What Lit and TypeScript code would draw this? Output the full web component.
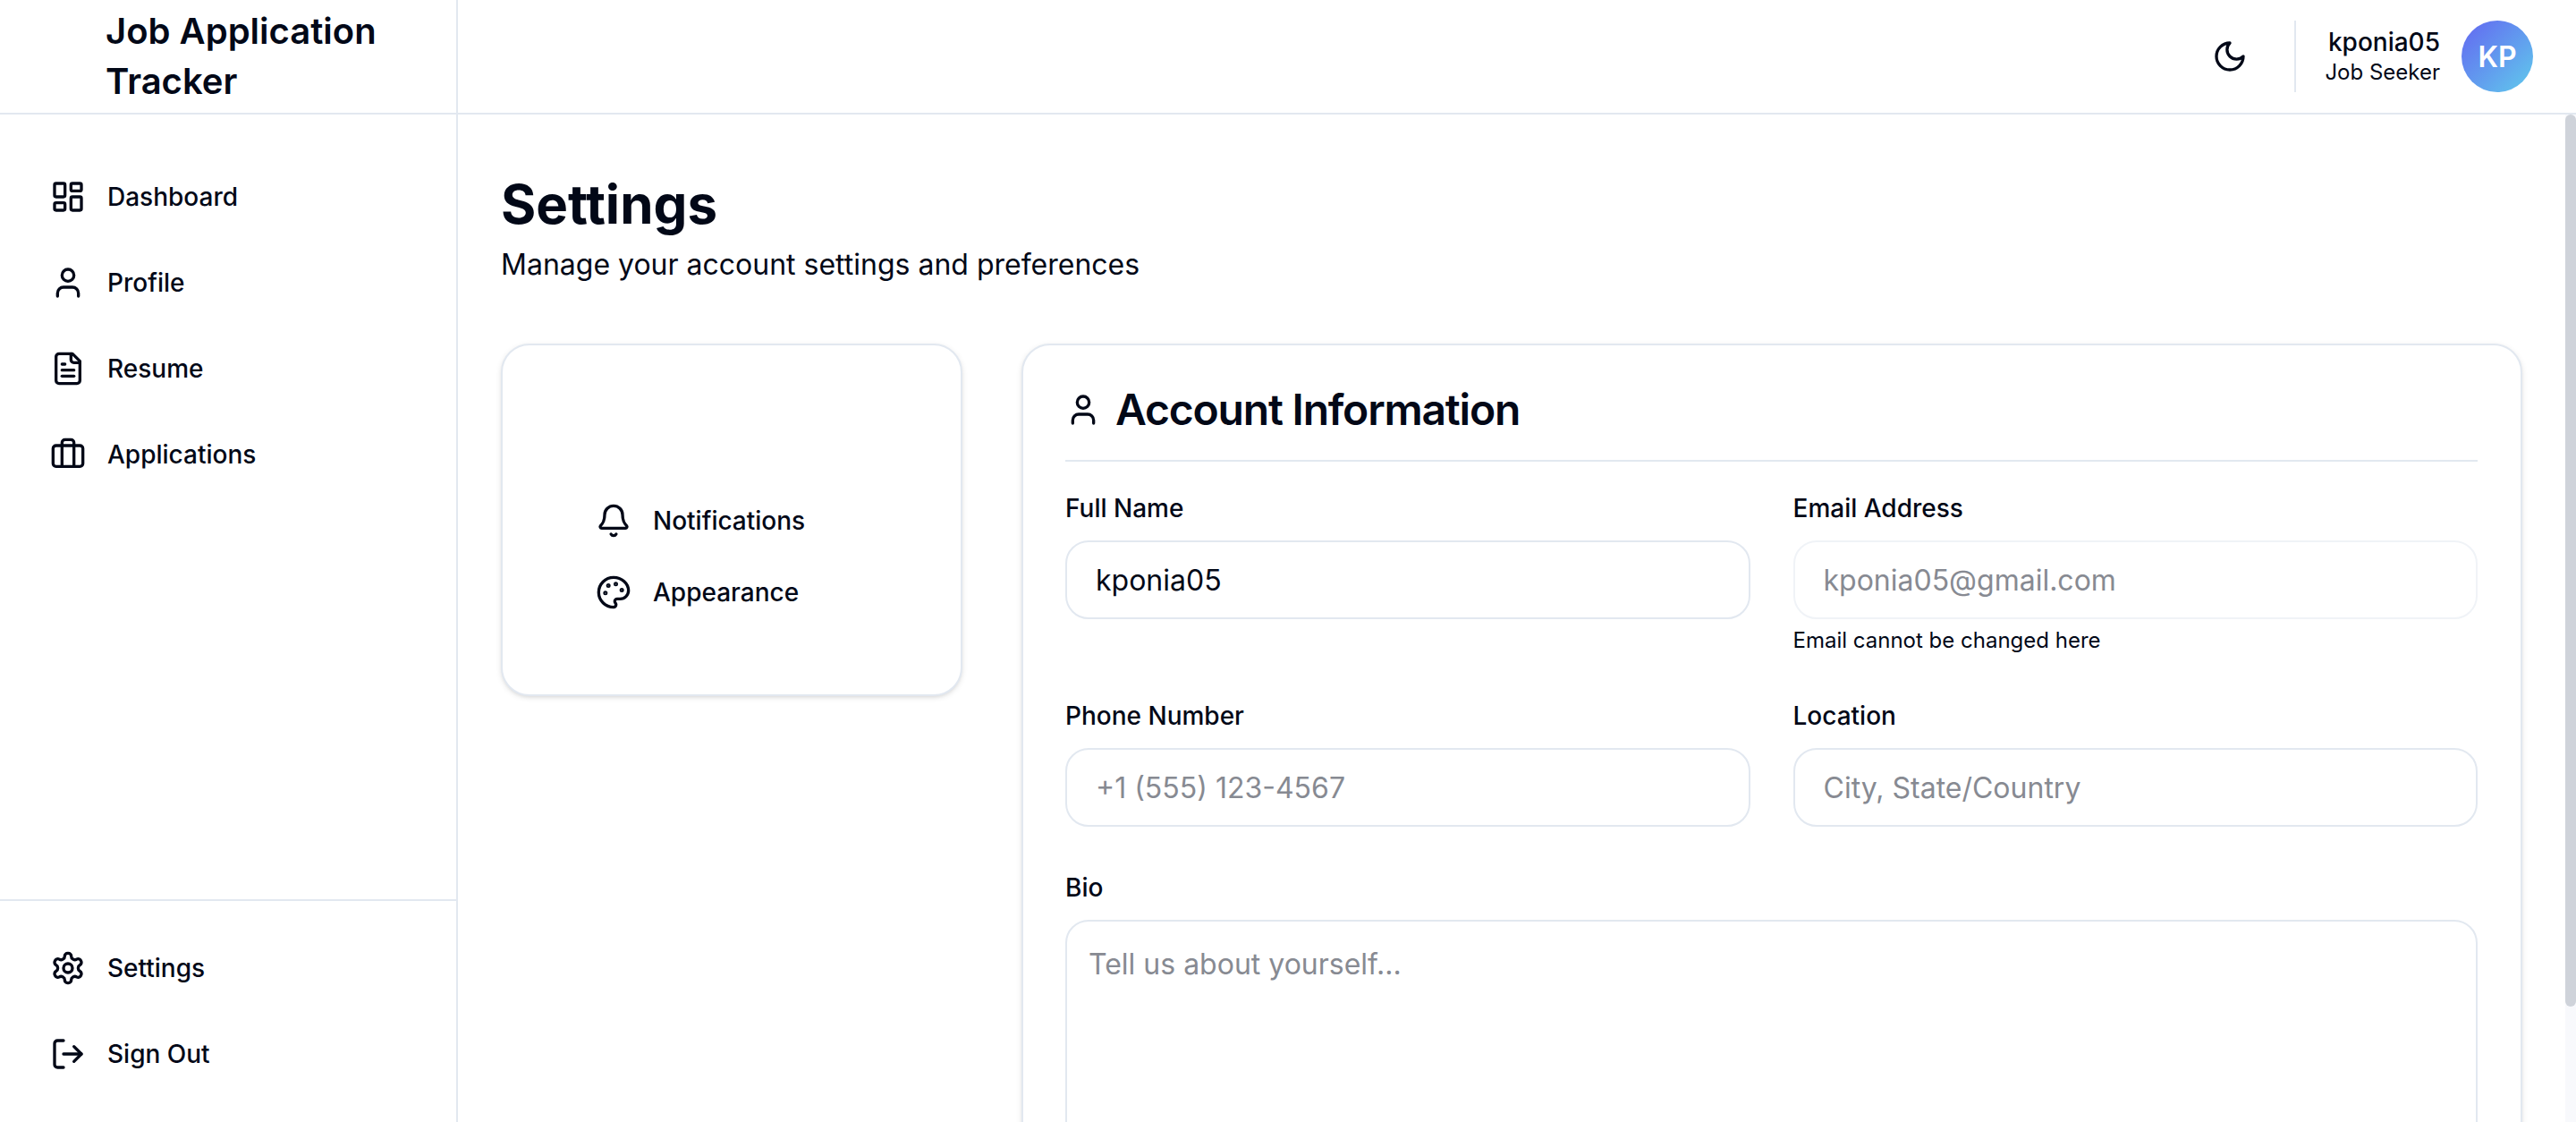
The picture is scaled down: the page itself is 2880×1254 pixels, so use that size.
import { LitElement, html, css, svg } from 'lit';
import { customElement } from 'lit/decorators.js';

const icons = {
  dashboard: svg`<rect x="3" y="3" width="7" height="9" rx="1"/><rect x="14" y="3" width="7" height="5" rx="1"/><rect x="14" y="12" width="7" height="9" rx="1"/><rect x="3" y="16" width="7" height="5" rx="1"/>`,
  user: svg`<path d="M19 21v-2a4 4 0 0 0-4-4H9a4 4 0 0 0-4 4v2"/><circle cx="12" cy="7" r="4"/>`,
  file: svg`<path d="M15 2H6a2 2 0 0 0-2 2v16a2 2 0 0 0 2 2h12a2 2 0 0 0 2-2V7Z"/><path d="M14 2v4a2 2 0 0 0 2 2h4"/><path d="M10 9H8"/><path d="M16 13H8"/><path d="M16 17H8"/>`,
  briefcase: svg`<path d="M16 20V4a2 2 0 0 0-2-2h-4a2 2 0 0 0-2 2v16"/><rect x="2" y="6" width="20" height="14" rx="2"/>`,
  settings: svg`<path d="M12.22 2h-.44a2 2 0 0 0-2 2v.18a2 2 0 0 1-1 1.73l-.43.25a2 2 0 0 1-2 0l-.15-.08a2 2 0 0 0-2.73.73l-.22.38a2 2 0 0 0 .73 2.73l.15.1a2 2 0 0 1 1 1.72v.51a2 2 0 0 1-1 1.74l-.15.09a2 2 0 0 0-.73 2.73l.22.38a2 2 0 0 0 2.73.73l.15-.08a2 2 0 0 1 2 0l.43.25a2 2 0 0 1 1 1.73V20a2 2 0 0 0 2 2h.44a2 2 0 0 0 2-2v-.18a2 2 0 0 1 1-1.73l.43-.25a2 2 0 0 1 2 0l.15.08a2 2 0 0 0 2.73-.73l.22-.39a2 2 0 0 0-.73-2.73l-.15-.08a2 2 0 0 1-1-1.74v-.5a2 2 0 0 1 1-1.74l.15-.09a2 2 0 0 0 .73-2.73l-.22-.38a2 2 0 0 0-2.73-.73l-.15.08a2 2 0 0 1-2 0l-.43-.25a2 2 0 0 1-1-1.73V4a2 2 0 0 0-2-2z"/><circle cx="12" cy="12" r="3"/>`,
  logout: svg`<path d="M9 21H5a2 2 0 0 1-2-2V5a2 2 0 0 1 2-2h4"/><path d="m16 17 5-5-5-5"/><path d="M21 12H9"/>`,
  moon: svg`<path d="M12 3a6 6 0 0 0 9 9 9 9 0 1 1-9-9Z"/>`,
  bell: svg`<path d="M10.268 21a2 2 0 0 0 3.464 0"/><path d="M3.262 15.326A1 1 0 0 0 4 17h16a1 1 0 0 0 .74-1.673C19.41 13.956 18 12.499 18 8A6 6 0 0 0 6 8c0 4.499-1.411 5.956-2.738 7.326"/>`,
  palette: svg`<circle cx="13.5" cy="6.5" r=".5" fill="currentColor"/><circle cx="17.5" cy="10.5" r=".5" fill="currentColor"/><circle cx="8.5" cy="7.5" r=".5" fill="currentColor"/><circle cx="6.5" cy="12.5" r=".5" fill="currentColor"/><path d="M12 2C6.5 2 2 6.5 2 12s4.5 10 10 10c.926 0 1.648-.746 1.648-1.688 0-.437-.18-.835-.437-1.125-.29-.289-.438-.652-.438-1.125a1.64 1.64 0 0 1 1.668-1.668h1.996c3.051 0 5.555-2.503 5.555-5.554C21.965 6.012 17.461 2 12 2z"/>`,
};

const icon = (name: keyof typeof icons) =>
  html`<svg class="icon" viewBox="0 0 24 24">${icons[name]}</svg>`;

const mainNav: [keyof typeof icons, string][] = [
  ['dashboard', 'Dashboard'],
  ['user', 'Profile'],
  ['file', 'Resume'],
  ['briefcase', 'Applications'],
];

const footNav: [keyof typeof icons, string][] = [
  ['settings', 'Settings'],
  ['logout', 'Sign Out'],
];

@customElement('app-root')
export class AppRoot extends LitElement {
  static styles = css`
    :host {
      display: flex;
      flex-direction: column;
      height: 100vh;
      overflow: hidden;
      background: #fff;
      color: #020817;
      font-family: Inter, 'Noto Sans', sans-serif;
    }
    .icon {
      width: 40px;
      height: 40px;
      flex: none;
      fill: none;
      stroke: currentColor;
      stroke-width: 2;
      stroke-linecap: round;
      stroke-linejoin: round;
    }

    .topbar {
      display: flex;
      flex: none;
      height: 128px;
      box-sizing: border-box;
      border-bottom: 2px solid #e2e8f0;
    }
    .brand {
      display: flex;
      align-items: center;
      flex: none;
      width: 512px;
      box-sizing: border-box;
      padding-left: 118px;
      padding-right: 80px;
      border-right: 2px solid #e2e8f0;
      font-size: 40px;
      line-height: 56px;
      font-weight: 600;
    }
    .top-right {
      display: flex;
      flex: 1;
      align-items: center;
      justify-content: flex-end;
      padding-right: 48px;
    }
    .theme {
      display: flex;
      margin-right: 52px;
    }
    .account {
      display: flex;
      align-items: center;
      gap: 24px;
      padding-left: 32px;
      height: 80px;
      border-left: 2px solid #e2e8f0;
    }
    .who {
      text-align: right;
    }
    .who-name {
      font-size: 28px;
      line-height: 36px;
      font-weight: 500;
    }
    .who-role {
      font-size: 24px;
      line-height: 32px;
    }
    .avatar {
      display: flex;
      align-items: center;
      justify-content: center;
      width: 80px;
      height: 80px;
      border-radius: 50%;
      background: linear-gradient(135deg, #6366f1, #60cbec);
      color: #fff;
      font-size: 32px;
      font-weight: 600;
    }

    .body {
      display: flex;
      flex: 1;
      min-height: 0;
    }
    .sidebar {
      display: flex;
      flex: none;
      flex-direction: column;
      justify-content: space-between;
      width: 512px;
      box-sizing: border-box;
      border-right: 2px solid #e2e8f0;
    }
    .nav {
      display: flex;
      flex-direction: column;
      gap: 16px;
      padding: 52px 0 36px 56px;
    }
    .nav-foot {
      padding-top: 35px;
      border-top: 2px solid #e2e8f0;
    }
    .nav-item {
      display: flex;
      align-items: center;
      gap: 24px;
      height: 80px;
      font-size: 28px;
      font-weight: 500;
    }

    .main {
      position: relative;
      flex: 1;
      min-width: 0;
      overflow: hidden;
      padding: 64px 60px 48px 48px;
    }
    .track {
      position: absolute;
      top: 0;
      right: 0;
      bottom: 0;
      width: 12px;
      background: #f8f9fc;
    }
    .thumb {
      height: 997px;
      border-radius: 6px;
      background: #cfd3da;
    }
    h1 {
      margin: 0;
      font-size: 60px;
      line-height: 72px;
      font-weight: 700;
    }
    .subtitle {
      margin: 8px 0 0;
      font-size: 32px;
      line-height: 48px;
    }
    .columns {
      display: grid;
      grid-template-columns: 516px 1fr;
      align-items: start;
      gap: 66px;
      margin-top: 64px;
    }
    .card {
      box-sizing: border-box;
      border: 2px solid #e2e8f0;
      border-radius: 32px;
      background: #fff;
      box-shadow: 0 2px 6px rgba(0, 0, 0, 0.1), 0 2px 4px -2px rgba(0, 0, 0, 0.1);
    }
    .tabs {
      display: flex;
      flex-direction: column;
      gap: 16px;
      height: 394px;
      padding: 164px 0 0 104px;
    }
    .tab {
      display: flex;
      align-items: center;
      gap: 24px;
      height: 64px;
      font-size: 28px;
      font-weight: 500;
    }
    .account-card {
      padding: 48px 48px 48px 47px;
      height: 1200px;
    }
    .card-head {
      display: flex;
      align-items: center;
      gap: 16px;
      padding-bottom: 32px;
      border-bottom: 2px solid #e2e8f0;
    }
    h2 {
      margin: 0;
      font-size: 48px;
      line-height: 48px;
      font-weight: 600;
      letter-spacing: -1.2px;
    }
    .form {
      display: grid;
      grid-template-columns: 1fr 1fr;
      gap: 48px;
      margin-top: 32px;
    }
    .wide {
      grid-column: 1 / 3;
    }
    label {
      display: block;
      margin-bottom: 16px;
      font-size: 28px;
      line-height: 40px;
      font-weight: 500;
    }
    input,
    textarea {
      display: block;
      width: 100%;
      box-sizing: border-box;
      border: 2px solid #e2e8f0;
      border-radius: 26px;
      outline: none;
      background: #fff;
      color: #020817;
      font: 32px/48px Inter, 'Noto Sans', sans-serif;
    }
    input {
      height: 88px;
      padding: 0 32px;
    }
    input[readonly] {
      border-color: #f0f3f7;
      color: #878a92;
    }
    textarea {
      height: 400px;
      padding: 24px;
      resize: none;
    }
    ::placeholder {
      color: #878a92;
      opacity: 1;
    }
    .hint {
      margin: 8px 0 0;
      font-size: 24px;
      line-height: 32px;
    }
  `;

  render() {
    return html`
      <header class="topbar">
        <div class="brand">Job Application Tracker</div>
        <div class="top-right">
          <div class="theme">${icon('moon')}</div>
          <div class="account">
            <div class="who">
              <div class="who-name">kponia05</div>
              <div class="who-role">Job Seeker</div>
            </div>
            <div class="avatar">KP</div>
          </div>
        </div>
      </header>
      <div class="body">
        <aside class="sidebar">
          <nav class="nav">${mainNav.map(this.renderNavItem)}</nav>
          <nav class="nav nav-foot">${footNav.map(this.renderNavItem)}</nav>
        </aside>
        <main class="main">
          <div class="track"><div class="thumb"></div></div>
          <h1>Settings</h1>
          <p class="subtitle">Manage your account settings and preferences</p>
          <div class="columns">
            <div class="card tabs">
              <div class="tab">${icon('bell')}Notifications</div>
              <div class="tab">${icon('palette')}Appearance</div>
            </div>
            <section class="card account-card">
              <div class="card-head">
                ${icon('user')}
                <h2>Account Information</h2>
              </div>
              <div class="form">
                <div>
                  <label>Full Name</label>
                  <input .value=${'kponia05'} />
                </div>
                <div>
                  <label>Email Address</label>
                  <input readonly .value=${'kponia05@gmail.com'} />
                  <p class="hint">Email cannot be changed here</p>
                </div>
                <div>
                  <label>Phone Number</label>
                  <input placeholder="+1 (555) 123-4567" />
                </div>
                <div>
                  <label>Location</label>
                  <input placeholder="City, State/Country" />
                </div>
                <div class="wide">
                  <label>Bio</label>
                  <textarea placeholder="Tell us about yourself..."></textarea>
                </div>
              </div>
            </section>
          </div>
        </main>
      </div>
    `;
  }

  renderNavItem([name, label]: [keyof typeof icons, string]) {
    return html`<div class="nav-item">${icon(name)}${label}</div>`;
  }
}
